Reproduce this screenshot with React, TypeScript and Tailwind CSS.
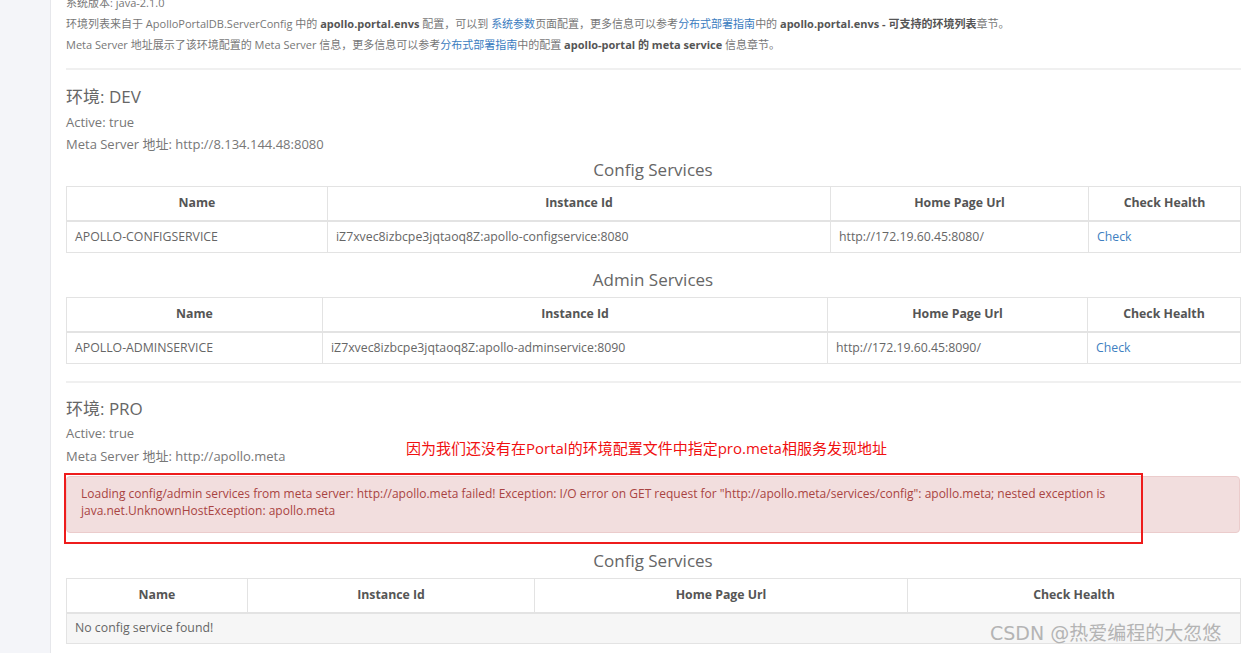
import React from 'react';

const FONT = { fontFamily: '"Open Sans", "Noto Sans CJK SC", sans-serif' };

interface Col {
  title: string;
  width: number;
}

interface Row {
  name: string;
  instance: string;
  url: string;
}

const ServiceTable: React.FC<{ cols: Col[]; rows: Row[]; empty?: string }> = ({ cols, rows, empty }) => (
  <table className="table-fixed border-collapse w-[1174px] text-[12.3px] text-[#666]">
    <colgroup>
      {cols.map((c) => (
        <col key={c.title} style={{ width: c.width }} />
      ))}
    </colgroup>
    <thead>
      <tr className="h-[34px]">
        {cols.map((c) => (
          <th key={c.title} className="border border-[#e3e3e3] border-b-2 font-bold text-[#555] text-center">
            {c.title}
          </th>
        ))}
      </tr>
    </thead>
    <tbody>
      {rows.map((r) => (
        <tr key={r.name} className="h-[32px]">
          <td className="border border-[#e3e3e3] px-2">{r.name}</td>
          <td className="border border-[#e3e3e3] px-2">{r.instance}</td>
          <td className="border border-[#e3e3e3] px-2">{r.url}</td>
          <td className="border border-[#e3e3e3] px-2 text-[#3f7fc1]">Check</td>
        </tr>
      ))}
      {empty && (
        <tr className="h-[31px] bg-[#f6f6f6]">
          <td colSpan={4} className="border border-[#e3e3e3] px-2">
            {empty}
          </td>
        </tr>
      )}
    </tbody>
  </table>
);

const Link: React.FC<{ children: React.ReactNode }> = ({ children }) => (
  <span className="text-[#3a7cc0]">{children}</span>
);

const B: React.FC<{ children: React.ReactNode }> = ({ children }) => (
  <b className="font-bold text-[#555]">{children}</b>
);

export default function App() {
  return (
    <div className="flex w-[1241px] h-[653px] overflow-hidden bg-white relative" style={FONT}>
      <div className="w-[51px] shrink-0 bg-[#f4f5f9] border-r border-[#e6e7eb]" />
      <div className="pl-[15px] flex-1 relative">
        <div className="-mt-[8px] text-[11px] leading-[21px] text-[#777]">
          <div>系统版本: java-2.1.0</div>
          <div>
            环境列表来自于 ApolloPortalDB.ServerConfig 中的 <B>apollo.portal.envs</B> 配置，可以到 <Link>系统参数</Link>页面配置，更多信息可以参考<Link>分布式部署指南</Link>中的 <B>apollo.portal.envs - 可支持的环境列表</B>章节。
          </div>
          <div>
            Meta Server 地址展示了该环境配置的 Meta Server 信息，更多信息可以参考<Link>分布式部署指南</Link>中的配置 <B>apollo-portal 的 meta service</B> 信息章节。
          </div>
        </div>
        <div className="mt-[13px] h-[2px] bg-[#f0f0f0]" />

        <div className="mt-[15px] text-[17px] leading-[24px] text-[#666]">环境: DEV</div>
        <div className="mt-[2px] text-[13px] leading-[22px] text-[#777]">Active: true</div>
        <div className="text-[13px] leading-[22px] text-[#777]">Meta Server 地址: http://8.134.144.48:8080</div>
        <div className="mt-[3px] w-[1174px] text-center text-[17px] leading-[24px] text-[#666]">Config Services</div>
        <div className="mt-[4px]">
          <ServiceTable
            cols={[
              { title: 'Name', width: 261 },
              { title: 'Instance Id', width: 503 },
              { title: 'Home Page Url', width: 258 },
              { title: 'Check Health', width: 152 },
            ]}
            rows={[
              {
                name: 'APOLLO-CONFIGSERVICE',
                instance: 'iZ7xvec8izbcpe3jqtaoq8Z:apollo-configservice:8080',
                url: 'http://172.19.60.45:8080/',
              },
            ]}
          />
        </div>
        <div className="mt-[15px] w-[1174px] text-center text-[17px] leading-[24px] text-[#666]">Admin Services</div>
        <div className="mt-[5px]">
          <ServiceTable
            cols={[
              { title: 'Name', width: 256 },
              { title: 'Instance Id', width: 505 },
              { title: 'Home Page Url', width: 260 },
              { title: 'Check Health', width: 153 },
            ]}
            rows={[
              {
                name: 'APOLLO-ADMINSERVICE',
                instance: 'iZ7xvec8izbcpe3jqtaoq8Z:apollo-adminservice:8090',
                url: 'http://172.19.60.45:8090/',
              },
            ]}
          />
        </div>
        <div className="mt-[17px] h-[2px] bg-[#f0f0f0]" />

        <div className="mt-[14px] text-[17px] leading-[24px] text-[#666]">环境: PRO</div>
        <div className="mt-[1px] text-[13px] leading-[22px] text-[#777]">Active: true</div>
        <div className="mt-[1px] text-[13px] leading-[22px] text-[#777]">Meta Server 地址: http://apollo.meta</div>
        <div className="mt-[9px] w-[1174px] h-[57px] rounded-[4px] bg-[#f2dede] border border-[#ebcccc] pl-[14px] pr-[14px] pt-[8px] text-[12px] leading-[17px] text-[#a94442]">
          Loading config/admin services from meta server: http://apollo.meta failed! Exception: I/O error on GET request for "http://apollo.meta/services/config": apollo.meta; nested exception is java.net.UnknownHostException: apollo.meta
        </div>
        <div className="mt-[16px] w-[1174px] text-center text-[17px] leading-[24px] text-[#666]">Config Services</div>
        <div className="mt-[5px]">
          <ServiceTable
            cols={[
              { title: 'Name', width: 181 },
              { title: 'Instance Id', width: 287 },
              { title: 'Home Page Url', width: 373 },
              { title: 'Check Health', width: 333 },
            ]}
            rows={[]}
            empty="No config service found!"
          />
        </div>

        {/* annotations drawn over the screenshot */}
        <div className="absolute left-[355px] top-[437px] text-[15px] leading-[22px] text-[#f01010]">
          因为我们还没有在Portal的环境配置文件中指定pro.meta相服务发现地址
        </div>
        <div className="absolute left-[13px] top-[473px] w-[1079px] h-[71px] border-2 border-[#ee1c1c]" />
      </div>
      <div
        className="absolute left-[990px] top-[620px] text-[19px] leading-[26px] text-[#b4b4b4]"
        style={{ fontFamily: '"DejaVu Sans", "Noto Sans CJK SC", sans-serif' }}
      >
        CSDN @热爱编程的大忽悠
      </div>
    </div>
  );
}
